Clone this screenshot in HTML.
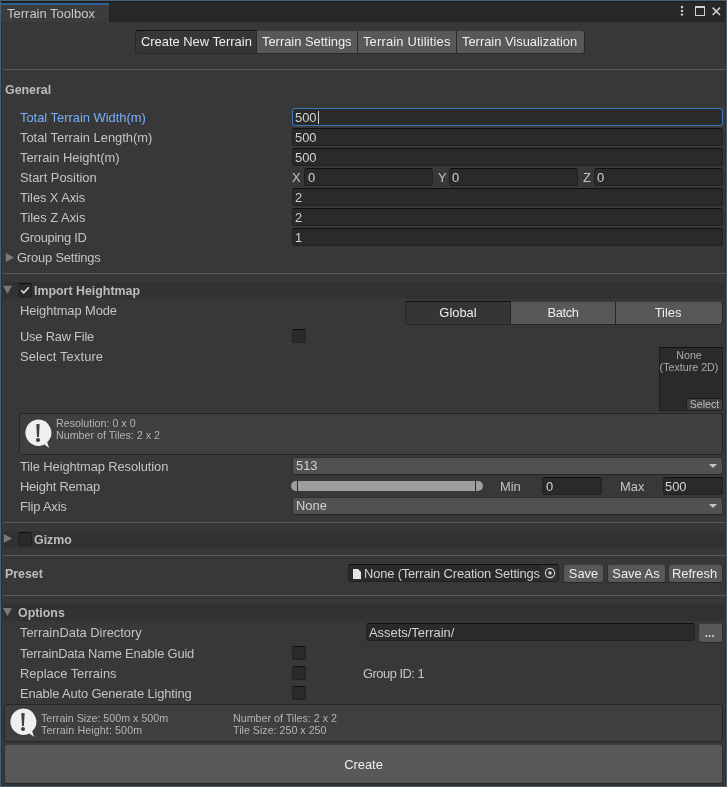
<!DOCTYPE html>
<html><head><meta charset="utf-8">
<style>
*{box-sizing:border-box;margin:0;padding:0}
html,body{width:727px;height:787px;overflow:hidden;background:#383838}
body{position:relative;font-family:"Liberation Sans",sans-serif;font-size:12.9px;color:#c4c4c4}
div,span{position:absolute}
.t,.sm{will-change:transform}
.t{white-space:nowrap;line-height:15px;height:15px}
.b{font-weight:bold;font-size:12.4px;color:#bcbcbc}
.sm{font-size:10.7px;line-height:12px;height:12px;color:#b4b4b4}
.fld{background:#2a2a2a;border:1px solid #212121;border-top-color:#0f0f0f;border-radius:3px}
.btn{background:#585858;border:1px solid #303030;border-top-color:#3a3a3a;border-bottom-color:#262626;border-radius:3px;color:#eeeeee;text-align:center}
.chk{width:14px;height:14px;background:#2a2a2a;border:1px solid #212121;border-top-color:#0d0d0d;border-radius:2px}
.sep{left:3px;right:1px;height:1px;background:#585858}
.band{left:1px;right:1px;height:17px;background:#323232}
.tri-r{width:0;height:0;border-top:4.75px solid transparent;border-bottom:4.75px solid transparent;border-left:8.5px solid #7a7a7a}
.tri-d{width:0;height:0;border-left:4.5px solid transparent;border-right:4.5px solid transparent;border-top:8px solid #7a7a7a}
.dd{background:#515151;border:1px solid #303030;border-bottom-color:#242424;border-radius:3px}
.ddarr{width:0;height:0;border-left:4px solid transparent;border-right:4px solid transparent;border-top:4px solid #c4c4c4}
.ft{color:#d2d2d2}
.bt{color:#eeeeee}
</style></head><body>
<!-- window border -->
<div style="left:0;top:0;width:727px;height:787px;border:1px solid #4a5f72"></div>
<div style="left:725px;top:1px;width:1px;height:785px;background:#302e2c"></div>
<div style="left:1px;top:22px;width:1px;height:764px;background:#302e2c"></div>
<div style="left:1px;top:785px;width:725px;height:1px;background:#2e2d2c"></div>
<!-- tab strip -->
<div style="left:1px;top:1px;width:724px;height:21px;background:#282828;border-bottom:1px solid #222"></div>
<div style="left:1px;top:1px;width:724px;height:1px;background:#1e1e1e"></div>
<div style="left:1px;top:1px;width:108px;height:21px;background:#3c3c3c"></div>
<div style="left:1px;top:1px;width:108px;height:2px;background:#201d1b"></div>
<div style="left:1px;top:3px;width:108px;height:2px;background:#2c6299"></div>
<div style="left:109px;top:2px;width:1px;height:20px;background:#222"></div>
<div class="t" style="left:7px;top:6px;font-size:13px;color:#c8c8c8">Terrain Toolbox</div>
<!-- header icons -->
<svg style="position:absolute;left:676px;top:2px" width="12" height="18"><circle cx="6" cy="5" r="1.2" fill="#d0d0d0"/><circle cx="6" cy="8.9" r="1.2" fill="#d0d0d0"/><circle cx="6" cy="12.6" r="1.2" fill="#d0d0d0"/></svg>
<div style="left:695px;top:6px;width:10px;height:10px;border:1px solid #d0d0d0;border-top-width:2px"></div>
<svg style="position:absolute;left:712px;top:7px" width="9" height="9" viewBox="0 0 9 9"><path d="M0.6 0.6L8 8M8 0.6L0.6 8" stroke="#d0d0d0" stroke-width="1.5"/></svg>

<!-- toolbar -->
<div style="left:135px;top:30px;width:450px;height:24px;border-radius:3px;background:#2a2a2a"></div>
<div style="left:136px;top:31px;width:120px;height:22px;background:#363636;border-radius:2px 0 0 2px"></div>
<div style="left:136px;top:30px;width:120px;height:1px;background:#121212"></div>
<div style="left:257px;top:31px;width:100px;height:22px;background:#585858"></div>
<div style="left:358px;top:31px;width:98px;height:22px;background:#585858"></div>
<div style="left:457px;top:31px;width:127px;height:22px;background:#585858;border-radius:0 2px 2px 0"></div>
<div style="left:257px;top:30px;width:327px;height:1px;background:#3a3a3a"></div>
<div class="t bt" style="left:141px;top:34px">Create New Terrain</div>
<div class="t bt" style="left:262px;top:34px">Terrain Settings</div>
<div class="t bt" style="left:363px;top:34px;letter-spacing:0.18px">Terrain Utilities</div>
<div class="t bt" style="left:462px;top:34px">Terrain Visualization</div>

<div class="sep" style="top:69px"></div>
<div class="t b" style="left:5px;top:83px">General</div>

<!-- General rows -->
<div class="t" style="left:20px;top:110px;color:#7baefa">Total Terrain Width(m)</div>
<div class="fld" style="left:292px;top:108px;width:431px;height:18px;border-color:#3a79bb"></div>
<div class="t ft" style="left:295px;top:110px">500</div>
<div style="left:318px;top:111px;width:1px;height:13px;background:#d2d2d2"></div>

<div class="t" style="left:20px;top:130px">Total Terrain Length(m)</div>
<div class="fld" style="left:292px;top:128px;width:431px;height:18px"></div>
<div class="t ft" style="left:295px;top:130px">500</div>

<div class="t" style="left:20px;top:150px">Terrain Height(m)</div>
<div class="fld" style="left:292px;top:148px;width:431px;height:18px"></div>
<div class="t ft" style="left:295px;top:150px">500</div>

<div class="t" style="left:20px;top:170px">Start Position</div>
<div class="t" style="left:292px;top:170px">X</div>
<div class="fld" style="left:304px;top:168px;width:129px;height:18px"></div>
<div class="t ft" style="left:308px;top:170px">0</div>
<div class="t" style="left:438px;top:170px">Y</div>
<div class="fld" style="left:449px;top:168px;width:129px;height:18px"></div>
<div class="t ft" style="left:452px;top:170px">0</div>
<div class="t" style="left:583px;top:170px">Z</div>
<div class="fld" style="left:594px;top:168px;width:129px;height:18px"></div>
<div class="t ft" style="left:597px;top:170px">0</div>

<div class="t" style="left:20px;top:190px;letter-spacing:-0.08px">Tiles X Axis</div>
<div class="fld" style="left:292px;top:188px;width:431px;height:18px"></div>
<div class="t ft" style="left:295px;top:190px">2</div>

<div class="t" style="left:20px;top:210px">Tiles Z Axis</div>
<div class="fld" style="left:292px;top:208px;width:431px;height:18px"></div>
<div class="t ft" style="left:295px;top:210px">2</div>

<div class="t" style="left:20px;top:230px;letter-spacing:-0.27px">Grouping ID</div>
<div class="fld" style="left:292px;top:228px;width:431px;height:18px"></div>
<div class="t ft" style="left:295px;top:230px">1</div>

<svg style="position:absolute;left:0;top:0" width="20" height="280"><path d="M5.8 253.1L14.1 257.55L5.8 262Z" fill="#7a7a7a"/></svg>
<div class="t" style="left:17px;top:250px;letter-spacing:-0.17px">Group Settings</div>

<div class="sep" style="top:273px"></div>

<!-- Import Heightmap -->
<div class="band" style="top:282px"></div>
<svg style="position:absolute;left:0;top:280px" width="20" height="20"><path d="M3 5.8H12L7.5 13.7Z" fill="#7a7a7a"/></svg>
<div class="chk" style="left:18px;top:283px"></div>
<svg style="position:absolute;left:20px;top:285px" width="10" height="10" viewBox="0 0 10 10"><path d="M1.2 5.2L3.8 7.8L8.8 2.2" stroke="#e0e0e0" stroke-width="1.6" fill="none"/></svg>
<div class="t b" style="left:34px;top:284px">Import Heightmap</div>

<div class="t" style="left:20px;top:303px;letter-spacing:-0.09px">Heightmap Mode</div>
<div style="left:405px;top:301px;width:318px;height:24px;border-radius:3px;background:#262626"></div>
<div style="left:406px;top:302px;width:104px;height:22px;background:#353535;border-radius:2px 0 0 2px"></div>
<div style="left:406px;top:301px;width:104px;height:1px;background:#111"></div>
<div style="left:511px;top:302px;width:104px;height:22px;background:#585858"></div>
<div style="left:616px;top:302px;width:106px;height:22px;background:#585858;border-radius:0 2px 2px 0"></div>
<div style="left:511px;top:301px;width:211px;height:1px;background:#3a3a3a"></div>
<div class="t bt" style="left:405px;top:305px;width:106px;text-align:center">Global</div>
<div class="t bt" style="left:510px;top:305px;width:106px;text-align:center;letter-spacing:-0.4px">Batch</div>
<div class="t bt" style="left:614px;top:305px;width:108px;text-align:center">Tiles</div>

<div class="t" style="left:20px;top:329px;letter-spacing:-0.22px">Use Raw File</div>
<div class="chk" style="left:292px;top:329px"></div>

<div class="t" style="left:20px;top:349px;letter-spacing:0.12px">Select Texture</div>
<div style="left:659px;top:347px;width:64px;height:64px;background:#2a2a2a;border:1px solid #1f1f1f;border-top-color:#111"></div>
<div class="sm" style="left:657px;top:349px;width:64px;text-align:center;line-height:12px;height:24px;white-space:nowrap;color:#ababab">None<br>(Texture 2D)</div>
<div style="left:686px;top:398px;width:36px;height:12px;background:#3e3e3e;border-top:1px solid #1c1c1c;border-left:1px solid #1c1c1c"></div>
<div class="sm" style="left:687px;top:398px;width:35px;text-align:center;font-size:10.6px;line-height:12px;color:#c0c0c0">Select</div>

<!-- help box -->
<div style="left:19px;top:413px;width:704px;height:42px;background:#3f3f3f;border:1px solid #262626;border-radius:3px"></div>
<svg style="position:absolute;left:23px;top:418px" width="30" height="32" viewBox="0 0 30 32"><path d="M15 1.5A13.2 13.2 0 1 0 21.5 26.5L26 30L24.2 24.2A13.2 13.2 0 0 0 15 1.5Z" fill="#efefef"/><path d="M13.3 6.2Q15 5.6 16.7 6.2L15.9 19H14.1Z" fill="#3f3f3f"/><circle cx="15" cy="22" r="2" fill="#3f3f3f"/></svg>
<div class="sm" style="left:56px;top:417px">Resolution: 0 x 0</div>
<div class="sm" style="left:56px;top:429px">Number of Tiles: 2 x 2</div>

<div class="t" style="left:20px;top:459px;letter-spacing:-0.1px">Tile Heightmap Resolution</div>
<div class="dd" style="left:292px;top:457px;width:431px;height:18px"></div>
<div class="t ft" style="left:296px;top:458px">513</div>
<div class="ddarr" style="left:709px;top:464px"></div>

<div class="t" style="left:20px;top:479px;letter-spacing:-0.2px">Height Remap</div>
<div style="left:291px;top:481px;width:192px;height:10px;background:#9e9e9e;border-radius:5px"></div>
<div style="left:297px;top:481px;width:1px;height:10px;background:#2a2a2a"></div>
<div style="left:475px;top:481px;width:1px;height:10px;background:#2a2a2a"></div>
<div class="t" style="left:500px;top:479px">Min</div>
<div class="fld" style="left:542px;top:477px;width:60px;height:18px"></div>
<div class="t ft" style="left:546px;top:479px">0</div>
<div class="t" style="left:620px;top:479px">Max</div>
<div class="fld" style="left:663px;top:477px;width:60px;height:18px"></div>
<div class="t ft" style="left:665px;top:479px">500</div>

<div class="t" style="left:20px;top:499px;letter-spacing:-0.15px">Flip Axis</div>
<div class="dd" style="left:292px;top:497px;width:431px;height:18px"></div>
<div class="t ft" style="left:296px;top:498px">None</div>
<div class="ddarr" style="left:709px;top:504px"></div>

<div class="sep" style="top:522px"></div>

<!-- Gizmo -->
<div class="band" style="top:531px"></div>
<svg style="position:absolute;left:0;top:530px" width="20" height="20"><path d="M3.8 4L12.1 8.4L3.8 12.8Z" fill="#7a7a7a"/></svg>
<div class="chk" style="left:18px;top:532px"></div>
<div class="t b" style="left:34px;top:533px">Gizmo</div>

<div class="sep" style="top:555px"></div>

<!-- Preset -->
<div class="t b" style="left:5px;top:567px">Preset</div>
<div class="fld" style="left:348px;top:564px;width:211px;height:18px"></div>
<div style="left:541px;top:565px;width:17px;height:16px;background:#303030;border-radius:0 2px 2px 0"></div>
<svg style="position:absolute;left:353px;top:569px" width="8" height="10" viewBox="0 0 8 10"><path d="M0 0H5L8 3V10H0Z" fill="#e6e6e6"/></svg>
<div class="t ft" style="left:364px;top:566px;width:177px;overflow:hidden;letter-spacing:-0.15px">None (Terrain Creation Settings</div>
<svg style="position:absolute;left:544px;top:567px" width="12" height="12" viewBox="0 0 12 12"><circle cx="6" cy="6" r="4.6" stroke="#d0d0d0" stroke-width="1.1" fill="none"/><circle cx="6" cy="6" r="1.8" fill="#d0d0d0"/></svg>
<div class="btn" style="left:563px;top:564px;width:41px;height:19px"></div>
<div class="t bt" style="left:564px;top:566px;width:39px;text-align:center">Save</div>
<div class="btn" style="left:607px;top:564px;width:59px;height:19px"></div>
<div class="t bt" style="left:608px;top:566px;width:56px;text-align:center">Save As</div>
<div class="btn" style="left:668px;top:564px;width:55px;height:19px"></div>
<div class="t bt" style="left:668px;top:566px;width:53px;text-align:center">Refresh</div>

<div class="sep" style="top:595px"></div>

<!-- Options -->
<div class="band" style="top:604px"></div>
<svg style="position:absolute;left:0;top:600px" width="20" height="20"><path d="M3 8H12L7.5 16Z" fill="#7a7a7a"/></svg>
<div class="t b" style="left:18px;top:606px">Options</div>

<div class="t" style="left:20px;top:625px">TerrainData Directory</div>
<div class="fld" style="left:366px;top:623px;width:329px;height:18px"></div>
<div class="t ft" style="left:369px;top:625px">Assets/Terrain/</div>
<div class="btn" style="left:698px;top:623px;width:25px;height:20px"></div>
<svg style="position:absolute;left:700px;top:630px" width="20" height="10" viewBox="0 0 20 10"><circle cx="6.5" cy="6" r="0.95" fill="#e0e0e0"/><circle cx="9.7" cy="6" r="0.95" fill="#e0e0e0"/><circle cx="12.9" cy="6" r="0.95" fill="#e0e0e0"/></svg>

<div class="t" style="left:20px;top:646px;letter-spacing:-0.18px">TerrainData Name Enable Guid</div>
<div class="chk" style="left:292px;top:646px"></div>
<div class="t" style="left:20px;top:666px">Replace Terrains</div>
<div class="chk" style="left:292px;top:666px"></div>
<div class="t" style="left:363px;top:666px;letter-spacing:-0.5px">Group ID: 1</div>
<div class="t" style="left:20px;top:686px;letter-spacing:-0.14px">Enable Auto Generate Lighting</div>
<div class="chk" style="left:292px;top:686px"></div>

<!-- help box 2 -->
<div style="left:4px;top:704px;width:719px;height:38px;background:#3f3f3f;border:1px solid #262626;border-radius:3px"></div>
<svg style="position:absolute;left:8px;top:707px" width="30" height="32" viewBox="0 0 30 32"><path d="M15 1.5A13.2 13.2 0 1 0 21.5 26.5L26 30L24.2 24.2A13.2 13.2 0 0 0 15 1.5Z" fill="#efefef"/><path d="M13.3 6.2Q15 5.6 16.7 6.2L15.9 19H14.1Z" fill="#3f3f3f"/><circle cx="15" cy="22" r="2" fill="#3f3f3f"/></svg>
<div class="sm" style="left:41px;top:712px">Terrain Size: 500m x 500m</div>
<div class="sm" style="left:41px;top:724px;letter-spacing:0.1px">Terrain Height: 500m</div>
<div class="sm" style="left:233px;top:712px">Number of Tiles: 2 x 2</div>
<div class="sm" style="left:233px;top:724px">Tile Size: 250 x 250</div>

<!-- Create -->
<div class="btn" style="left:4px;top:744px;width:719px;height:40px"></div>
<div class="t bt" style="left:4px;top:757px;width:719px;text-align:center">Create</div>
</body></html>
